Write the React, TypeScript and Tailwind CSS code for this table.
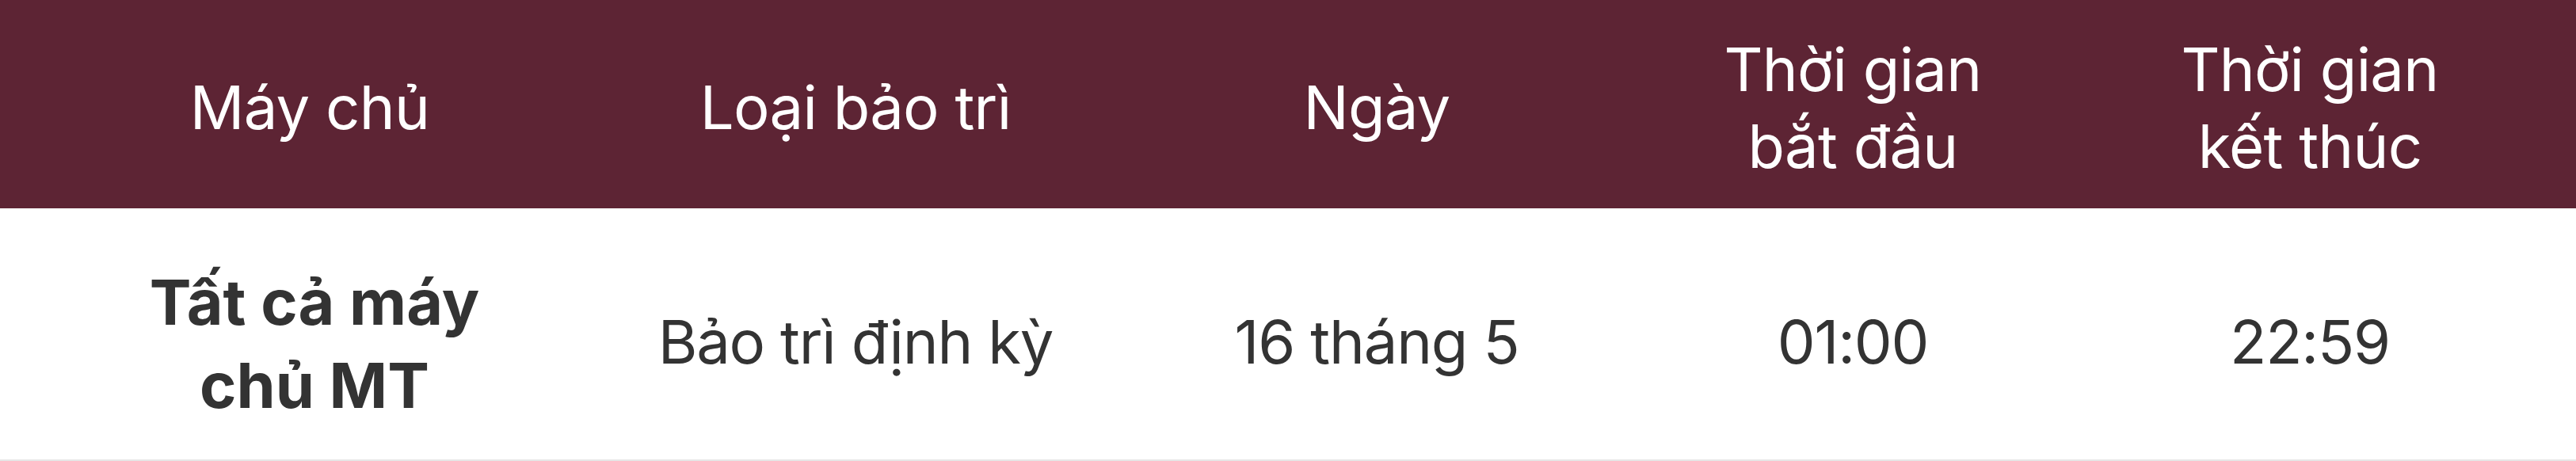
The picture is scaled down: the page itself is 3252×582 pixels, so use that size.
const headers = [
  { label: "Máy chủ", pad: "px-[80px]" },
  { label: "Loại bảo trì", pad: "px-[40px]" },
  { label: "Ngày", pad: "px-[80px]" },
  { label: "Thời gian bắt đầu", pad: "px-[50px]" },
  { label: "Thời gian kết thúc", pad: "px-[160px]" },
]

const rows = [
  { server: "Tất cả máy chủ MT", type: "Bảo trì định kỳ", date: "16 tháng 5", start: "01:00", end: "22:59" },
]

const cols = "grid grid-cols-[782px_596px_720px_482px_672px]"

export default function App() {
  return (
    <div className="w-[3252px] bg-white font-['Inter','Noto_Sans',sans-serif]">
      <div className={`${cols} h-[263px] bg-[#5d2434] pt-[8px] text-[76px] font-normal leading-[97px] tracking-[-0.01em] text-white`}>
        {headers.map((h) => (
          <div key={h.label} className={`flex items-center justify-center text-center ${h.pad}`}>
            {h.label}
          </div>
        ))}
      </div>
      {rows.map((r) => (
        <div
          key={r.server}
          className={`${cols} h-[319px] border-b-2 border-[#e6e6e6] pt-[19px] text-[76px] leading-[97px] tracking-[-0.016em] text-[#333333]`}
        >
          <div className="flex items-center justify-center pl-[176px] pr-[164px] pt-[5px] text-center text-[79px] font-bold leading-[105px] tracking-normal">
            {r.server}
          </div>
          <div className="flex items-center justify-center text-center">{r.type}</div>
          <div className="flex items-center justify-center text-center">{r.date}</div>
          <div className="flex items-center justify-center text-center">{r.start}</div>
          <div className="flex items-center justify-center text-center">{r.end}</div>
        </div>
      ))}
    </div>
  )
}
